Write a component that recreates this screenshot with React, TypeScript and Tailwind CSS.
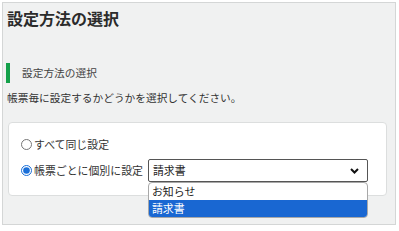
import { useState } from "react";

const font = { fontFamily: '"Noto Sans CJK JP", "Noto Sans", sans-serif' };

export default function App() {
  const [mode, setMode] = useState<"same" | "each">("each");
  const options = ["お知らせ", "請求書"];
  const [selected, setSelected] = useState("請求書");

  return (
    <div className="w-[399px] h-[231px] bg-white pt-[2px] pl-[2px]" style={font}>
      <div className="w-[394px] h-[223px] border border-[#d4d6d6] bg-[#f0f1f1] text-[#333]">
        <h1 className="pl-[4px] pt-[3px] text-[16px] leading-[24px] font-bold text-[#2b2b2b]">
          設定方法の選択
        </h1>

        {/* Section heading */}
        <div className="mt-[33px] flex items-center">
          <span className="ml-[3px] w-[4px] h-[20px] bg-[#14a04a]" />
          <span className="ml-[12px] text-[10.7px] leading-[20px] text-[#444]">
            設定方法の選択
          </span>
        </div>
        <p className="mt-[5px] pl-[4px] text-[10.7px] leading-[20px] text-[#333]">
          帳票毎に設定するかどうかを選択してください。
        </p>

        {/* Options card */}
        <div className="mt-[14px] ml-[5px] w-[379px] h-[74px] bg-white border border-[#dcdede] rounded-[4px] pl-[12px] pt-[13px]">
          <label className="flex items-center h-[16px] text-[10.9px] text-[#333] cursor-pointer">
            <input
              type="radio"
              name="mode"
              checked={mode === "same"}
              onChange={() => setMode("same")}
              className="m-0 w-[11px] h-[11px] accent-[#1a6fd8]"
            />
            <span className="ml-[2px]">すべて同じ設定</span>
          </label>
          <div className="mt-[7px] flex items-center h-[23px]">
            <label className="flex items-center text-[10.9px] text-[#333] cursor-pointer">
              <input
                type="radio"
                name="mode"
                checked={mode === "each"}
                onChange={() => setMode("each")}
                className="m-0 w-[11px] h-[11px] accent-[#1a6fd8]"
              />
              <span className="ml-[2px]">帳票ごとに個別に設定</span>
            </label>
            <div className="relative ml-[5px]">
              <div className="w-[220px] h-[23px] border border-[#555] rounded-[2px] bg-white flex items-center justify-between pl-[4px] pr-[8px] text-[10.9px] text-[#222]">
                <span>{selected}</span>
                <svg width="9" height="6" viewBox="0 0 9 6">
                  <path d="M1 1l3.5 3.5L8 1" fill="none" stroke="#111" strokeWidth="2" />
                </svg>
              </div>
              {/* Open dropdown list */}
              <div className="absolute left-0 top-[23px] w-[220px] bg-white border border-[#a8a8a8] rounded-[4px] overflow-hidden z-10">
                {options.map((o) => (
                  <div
                    key={o}
                    onClick={() => setSelected(o)}
                    className={
                      o === selected
                        ? "h-[17px] leading-[17px] pl-[3px] text-[10.9px] bg-[#1967d2] text-white"
                        : "h-[17px] leading-[17px] pl-[3px] text-[10.9px] text-[#222]"
                    }
                  >
                    {o}
                  </div>
                ))}
              </div>
            </div>
          </div>
        </div>
      </div>
    </div>
  );
}
